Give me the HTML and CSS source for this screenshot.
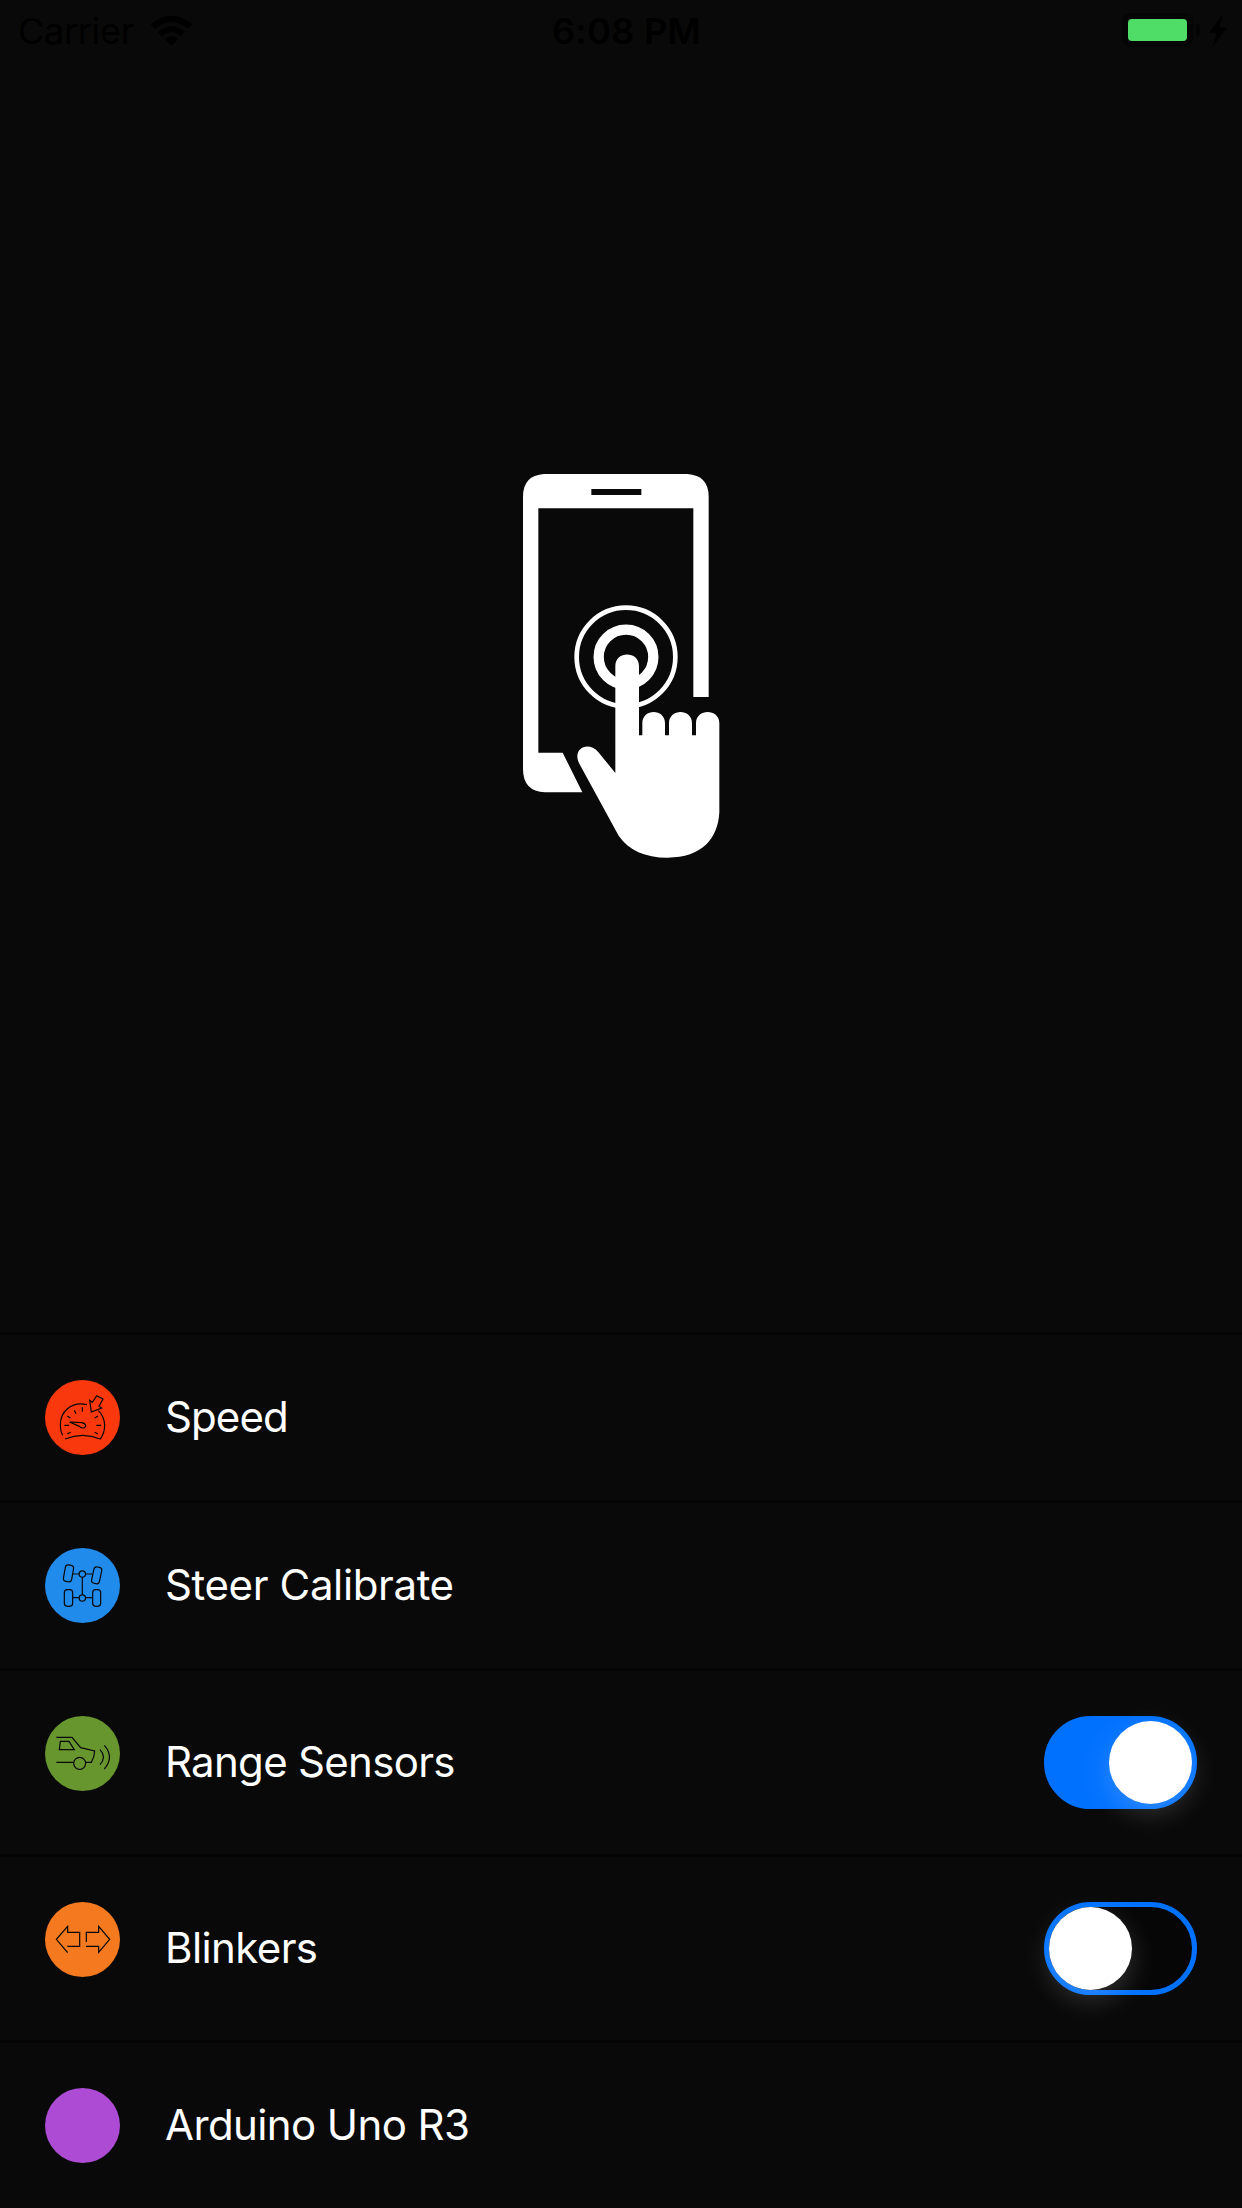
FILE: index.html
```html
<!DOCTYPE html>
<html lang="en">
<head>
<meta charset="utf-8">
<title>Car Control</title>
<link rel="stylesheet" href="styles.css">
</head>
<body>
<header class="status">
  <div class="status-left">
    <span class="carrier">Carrier</span>
    <svg class="wifi" viewBox="448 42 130 94"><path d="M450 71Q513 18 576 71L563 84Q513 42 463 84ZM471 93Q513 59 554 93L541 106Q513 83 484 106ZM493 115Q513 100 533 115L513 135Z"/></svg>
  </div>
  <span class="time">6:08 PM</span>
  <div class="status-right">
    <span class="battery"><span class="battery-level"></span></span>
    <span class="battery-tip"></span>
    <svg class="bolt" viewBox="381 40 54 100"><path d="M423 41L381 97H404L391 140L435 81H412Z"/></svg>
  </div>
</header>
<main class="hero">
  <svg class="touch" viewBox="48 48 630 1200">
    <path fill="#fff" fill-rule="evenodd" d="M132 72H562Q626 76 626 140V741H580V175H115V908H188L247 1027H135Q69 1024 69 957V140Q69 76 132 72ZM274 117V135H424V117Z"/>
    <circle cx="378" cy="621" r="148" fill="none" stroke="#fff" stroke-width="14"/>
    <circle cx="378" cy="621" r="82" fill="none" stroke="#fff" stroke-width="31"/>
    <path fill="#fff" d="M346 969V648C346 602 417 602 417 648V856H427V820C427 775 495 775 495 820V856H507V820C507 775 576 775 576 820V856H588V820C588 775 658 775 658 820V1087C654 1165 607 1223 502 1223C436 1223 385 1200 356 1157L238 941C215 897 263 871 294 905Z"/>
  </svg>
</main>
<ul class="menu">
  <li class="row">
    <span class="badge red"><svg viewBox="45 45 225 225"><path d="M171 119C124 108 90 140 91 182Q91 199 98 211M105 222Q158 200 211 222Q224 204 224 180Q222 153 205 137M157 127V140M133 136L138 146M112 153L121 159M103 181H117M112 207L122 202M204 153L194 159M213 181H199M204 207L194 202M200 92L219 102L207 124L215 129L184 141L179 106L187 112ZM119 171L156 173C170 176 170 188 159 189Q153 189 148 184Z"/></svg></span>
    <span class="label speed">Speed</span>
  </li>
  <li class="row">
    <span class="badge blue"><svg viewBox="45 54 225 225"><g><rect x="103" y="105" width="25" height="50" rx="9" transform="rotate(10 115 130)"/><rect x="188" y="111" width="24" height="50" rx="9" transform="rotate(12 200 136)"/><rect x="103" y="179" width="25" height="50" rx="9"/><rect x="188" y="179" width="24" height="50" rx="9"/><circle cx="157" cy="132" r="9.5"/><circle cx="157" cy="204" r="9.5"/><path d="M129 132H147M167 132H187M157 142V194M128 203H147M167 203H188"/></g></svg></span>
    <span class="label steer">Steer Calibrate</span>
  </li>
  <li class="row">
    <span class="badge green"><svg viewBox="45 48 225 225"><path d="M79 112H126L152 143L194 153Q193 172 184 187H168M131 187H79M91 124H117L133 149H88ZM210 149Q231 171 210 194M223 136Q254 171 223 207"/><circle cx="149" cy="190" r="18"/></svg></span>
    <span class="label range">Range Sensors</span>
    <span class="switch on"><span class="knob"></span></span>
  </li>
  <li class="row">
    <span class="badge orange"><svg viewBox="45 51 225 225"><path d="M113 203L79 163L113 124V142H149V184H112M169 171V142H206V124L239 163L206 202V184H168"/></svg></span>
    <span class="label blinkers">Blinkers</span>
    <span class="switch"><span class="knob"></span></span>
  </li>
  <li class="row">
    <span class="badge purple"></span>
    <span class="label board">Arduino Uno R3</span>
  </li>
</ul>
</body>
</html>
```
FILE: styles.css
```css
* { box-sizing: border-box; }
body {
  margin: 0;
  height: 2208px;
  display: flex;
  flex-direction: column;
  background: #090909;
  color: #fff;
  font-family: Inter, "Liberation Sans", sans-serif;
  overflow: hidden;
}
svg { display: block; }

.status {
  display: grid;
  grid-template-columns: 1fr auto 1fr;
  align-items: center;
  height: 60px;
  padding: 0 15px 0 18px;
  color: #000;
  font-size: 36px;
  line-height: 58px;
}
.status-left, .status-right { display: flex; align-items: center; }
.status-left { gap: 16px; }
.status-right { justify-content: flex-end; }
.carrier { width: 116px; padding-top: 2px; letter-spacing: -0.3px; white-space: nowrap; }
.wifi { width: 43px; height: 31px; }
.time { font-weight: 600; padding: 2px 0 0 8px; letter-spacing: 0.3px; }
.battery {
  width: 71px;
  height: 34px;
  padding: 3px;
  border: 3px solid #050505;
  border-radius: 9px;
  background: #060606;
}
.battery-level { display: block; height: 22px; border-radius: 4px; background: #4fdc67; }
.battery-tip { width: 4px; height: 12px; margin: 0 9px 0 3px; border-radius: 0 4px 4px 0; background: #040404; }
.bolt { width: 18px; height: 33px; }

.hero {
  flex: 1;
  display: flex;
  align-items: center;
  justify-content: center;
  padding-bottom: 60px;
}
.touch { width: 210px; height: 400px; }

.menu { margin: 0; padding: 0; list-style: none; }
.row {
  display: flex;
  align-items: center;
  padding: 45px;
  border-top: 3px solid #040404;
}
.badge {
  align-self: flex-start;
  flex: none;
  width: 75px;
  height: 75px;
  border-radius: 50%;
}
.badge svg {
  width: 75px;
  height: 75px;
  fill: none;
  stroke: #080808;
  stroke-width: 3.6;
}
.red { background: #f9390d; }
.blue { background: #218bec; }
.green { background: #67962f; }
.orange { background: #f57a1f; }
.purple { background: #ae4bd4; }
.label {
  flex: 1;
  margin-left: 45px;
  padding-bottom: 1px;
  font-size: 42px;
  line-height: 50px;
  white-space: nowrap;
}
.speed { letter-spacing: -0.9px; }
.steer { letter-spacing: -0.38px; }
.range { letter-spacing: -0.7px; }
.blinkers { letter-spacing: -0.6px; }
.board { letter-spacing: -0.6px; }
.switch {
  display: flex;
  width: 153px;
  height: 93px;
  border: 5px solid #0071ff;
  border-radius: 47px;
  background: #060606;
}
.knob {
  width: 83px;
  height: 83px;
  border-radius: 50%;
  background: #fff;
  box-shadow: 0 9px 28px rgba(255, 255, 255, 0.18);
}
.on { justify-content: flex-end; background: #0071ff; }
```
